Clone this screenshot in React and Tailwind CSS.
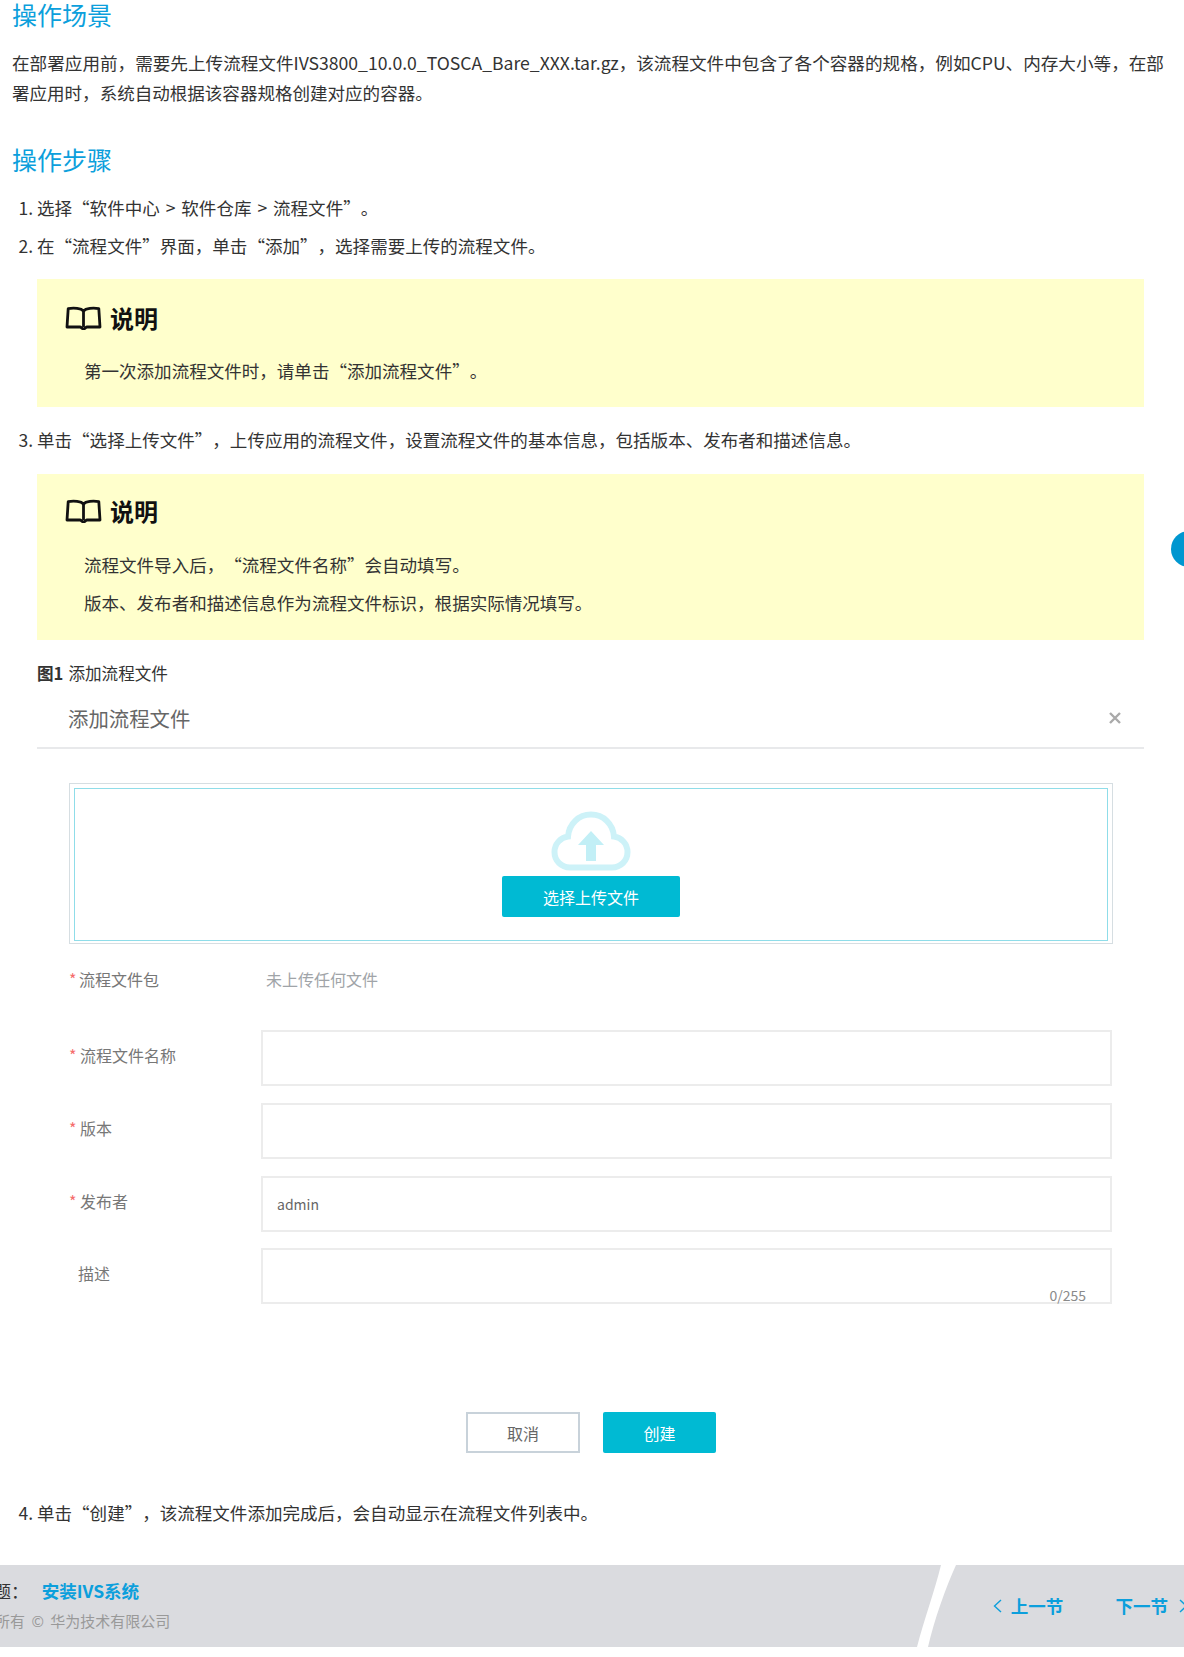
const FONT = "font-['Noto_Sans_CJK_SC','Noto_Sans',sans-serif]";

// the quotes in the reference take a full character cell
const Lq = () => <span className="inline-block w-[1em] text-right">“</span>;
const Rq = () => <span className="inline-block w-[1em] text-left">”</span>;
const Gt = () => <span className="mx-[2px]"> &gt; </span>;

const BookIcon = () => (
  <svg width="37" height="24" viewBox="0 0 37 24" fill="none" stroke="#111" strokeWidth="2.8" strokeLinejoin="round">
    <path d="M18.5 5C16 2.2 9 1.6 3.2 2.6L2 21H15C16.2 21 17 22.8 18.5 22.8C20 22.8 20.8 21 22 21H35L33.8 2.6C28 1.6 21 2.2 18.5 5Z" />
    <path d="M18.5 5V21" />
  </svg>
);

const CloudIcon = () => (
  <svg width="80" height="60" viewBox="0 0 80 60" fill="none">
    <path
      d="M19 56.5H61C70 56.5 76.5 49.5 76.5 41C76.5 33 70.5 26.5 63 25.5C62 13 52.5 3.5 40 3.5C27.5 3.5 18 13 17 25.5C9.5 26.5 3.5 33 3.5 41C3.5 49.5 10 56.5 19 56.5Z"
      stroke="#cdf2f8"
      strokeWidth="6"
    />
    <path d="M40 20L53 34H45V50H35V34H27Z" fill="#c2eff6" />
  </svg>
);

const Note = ({ children, className }) => (
  <div className={`bg-[#ffffcc] pl-[47px] ${className}`}>
    <div className="-ml-[19px] flex h-[30px] items-center gap-[8px]">
      <BookIcon />
      <span className="text-[24px] leading-[30px] font-bold text-[#111]">说明</span>
    </div>
    {children}
  </div>
);

const FormRow = ({ label, required, children, className = '' }) => (
  <div className={`flex ${className}`}>
    <div className="flex h-[49px] w-[192px] shrink-0 items-center text-[16px] text-[#777]">
      {required ? <span className="w-[11px] text-[#f56c6c]">*</span> : <span className="w-[9px]" />}
      {label}
    </div>
    {children}
  </div>
);

const InputBox = ({ children }) => (
  <div className="relative flex h-[56px] w-[851px] items-center border-2 border-[#ececec] pl-[14px] text-[14px] text-[#666]">
    {children}
  </div>
);

export default function App() {
  return (
    <div className={`relative h-[1657px] w-[1184px] overflow-hidden bg-white text-[17.55px] text-[#333] ${FONT}`}>
      <div className="px-3">
        <h2 className="h-[28px] text-[25px] leading-[28px] text-[#0c9fdc]">操作场景</h2>
        <p className="mt-[20px] leading-[30px]">
          <span className="text-[17.6px]">
            在部署应用前，需要先上传流程文件IVS3800_10.0.0_TOSCA_Bare_XXX.tar.gz，该流程文件中包含了各个容器的规格，例如CPU、内存大小等，在部
          </span>
          <br />
          署应用时，系统自动根据该容器规格创建对应的容器。
        </p>
        <h2 className="mt-[36px] h-[30px] text-[25px] leading-[30px] text-[#0c9fdc]">操作步骤</h2>

        <ol className="mt-[15px] list-decimal pr-[28px] pl-[25px] leading-[38px]">
          <li>
            选择<Lq />软件中心<Gt />软件仓库<Gt />流程文件<Rq />。
          </li>
          <li>
            在<Lq />流程文件<Rq />界面，单击<Lq />添加<Rq />，选择需要上传的流程文件。
            <Note className="mt-[14px] pt-[24px] pb-[21px]">
              <p className="mt-[23px] leading-[30px]">
                第一次添加流程文件时，请单击<Lq />添加流程文件<Rq />。
              </p>
            </Note>
          </li>
          <li className="mt-[14px]">
            单击<Lq />选择上传文件<Rq />，上传应用的流程文件，设置流程文件的基本信息，包括版本、发布者和描述信息。
            <Note className="mt-[15px] pt-[22px] pb-[18px]">
              <p className="mt-[20px]">
                流程文件导入后，<Lq />流程文件名称<Rq />会自动填写。
              </p>
              <p>版本、发布者和描述信息作为流程文件标识，根据实际情况填写。</p>
            </Note>

            <p className="mt-[18px] h-[30px] text-[16.6px] leading-[30px]">
              <b>图1</b>
              <span className="ml-[5px]">添加流程文件</span>
            </p>

            <div className="flex h-[61px] items-center justify-between border-b-2 border-[#e8e9eb] pr-[23px] pl-[31px]">
              <span className="text-[20.4px] text-[#666]">添加流程文件</span>
              <svg width="12" height="12" viewBox="0 0 12 12" stroke="#aaa" strokeWidth="2.4">
                <path d="M1 1L11 11M11 1L1 11" />
              </svg>
            </div>

            <div className="mt-[34px] mr-[31px] ml-[32px]">
              <div className="h-[161px] border border-[#d6dee2] px-[4px] pt-[4px] pb-[2px]">
                <div className="flex h-full flex-col items-center border border-[#8fdde9] pt-[22px]">
                  <CloudIcon />
                  <button className="mt-[5px] h-[41px] w-[178px] rounded-[2px] bg-[#00bad3] text-[16px] text-white">
                    选择上传文件
                  </button>
                </div>
              </div>

              <div className="mt-[10px] flex h-[50px] items-center text-[16px]">
                <div className="flex w-[197px] items-center text-[#777]">
                  <span className="w-[10px] text-[#f56c6c]">*</span>流程文件包
                </div>
                <span className="text-[#a0a4a8]">未上传任何文件</span>
              </div>

              <FormRow label="流程文件名称" required className="mt-[26px]">
                <InputBox />
              </FormRow>
              <FormRow label="版本" required className="mt-[17px]">
                <InputBox />
              </FormRow>
              <FormRow label="发布者" required className="mt-[17px]">
                <InputBox>admin</InputBox>
              </FormRow>
              <FormRow label="描述" className="mt-[16px]">
                <InputBox>
                  <span className="absolute right-[24px] -bottom-[3px] leading-[20px] text-[#8a8a8a]">0/255</span>
                </InputBox>
              </FormRow>

              <div className="mt-[108px] flex h-[41px] gap-[23px] pl-[397px] text-[16px]">
                <button className="w-[114px] border-2 border-[#c8d2da] text-[#666]">取消</button>
                <button className="w-[113px] rounded-[2px] bg-[#00bad3] text-white">创建</button>
              </div>
            </div>
          </li>
          <li className="mt-[41px]">
            单击<Lq />创建<Rq />，该流程文件添加完成后，会自动显示在流程文件列表中。
          </li>
        </ol>
      </div>

      {/* footer bar, its text runs off the left and right edges like in the page */}
      <footer className="relative mt-[33px] flex h-[82px] justify-between bg-[#dadbdf]">
        <div className="pt-[12px]">
          <div className="-ml-[59px] flex h-[28px] items-center whitespace-nowrap">
            <span>上一主题：</span>
            <a className="ml-[13px] font-bold text-[#0c9fdc]">安装IVS系统</a>
          </div>
          <div className="mt-[2px] -ml-[35px] text-[15px] leading-[28px] whitespace-nowrap text-[#999]">
            版权所有<span className="mx-[3px]"> © </span>华为技术有限公司
          </div>
        </div>
        <div className="-mr-[4px] flex items-center gap-[9px] font-bold text-[#0c9fdc]">
          <svg width="9" height="14" viewBox="0 0 9 14" fill="none" stroke="#0c9fdc" strokeWidth="1.4">
            <path d="M8 1L1.5 7L8 13" />
          </svg>
          <span>上一节</span>
          <span className="ml-[43px]">下一节</span>
          <svg width="9" height="14" viewBox="0 0 9 14" fill="none" stroke="#0c9fdc" strokeWidth="1.4" className="ml-[2px]">
            <path d="M1 1L7.5 7L1 13" />
          </svg>
        </div>
        <svg className="absolute top-0 left-[910px] h-[82px] w-[50px]" viewBox="0 0 50 82">
          <path d="M31 0H46C36 22 24 55 18 82H7C14 55 25 25 31 0Z" fill="#fff" />
        </svg>
      </footer>

      <div className="absolute top-[531px] left-[1171px] h-[36px] w-[36px] rounded-full bg-[#0097d0]" />
    </div>
  );
}
